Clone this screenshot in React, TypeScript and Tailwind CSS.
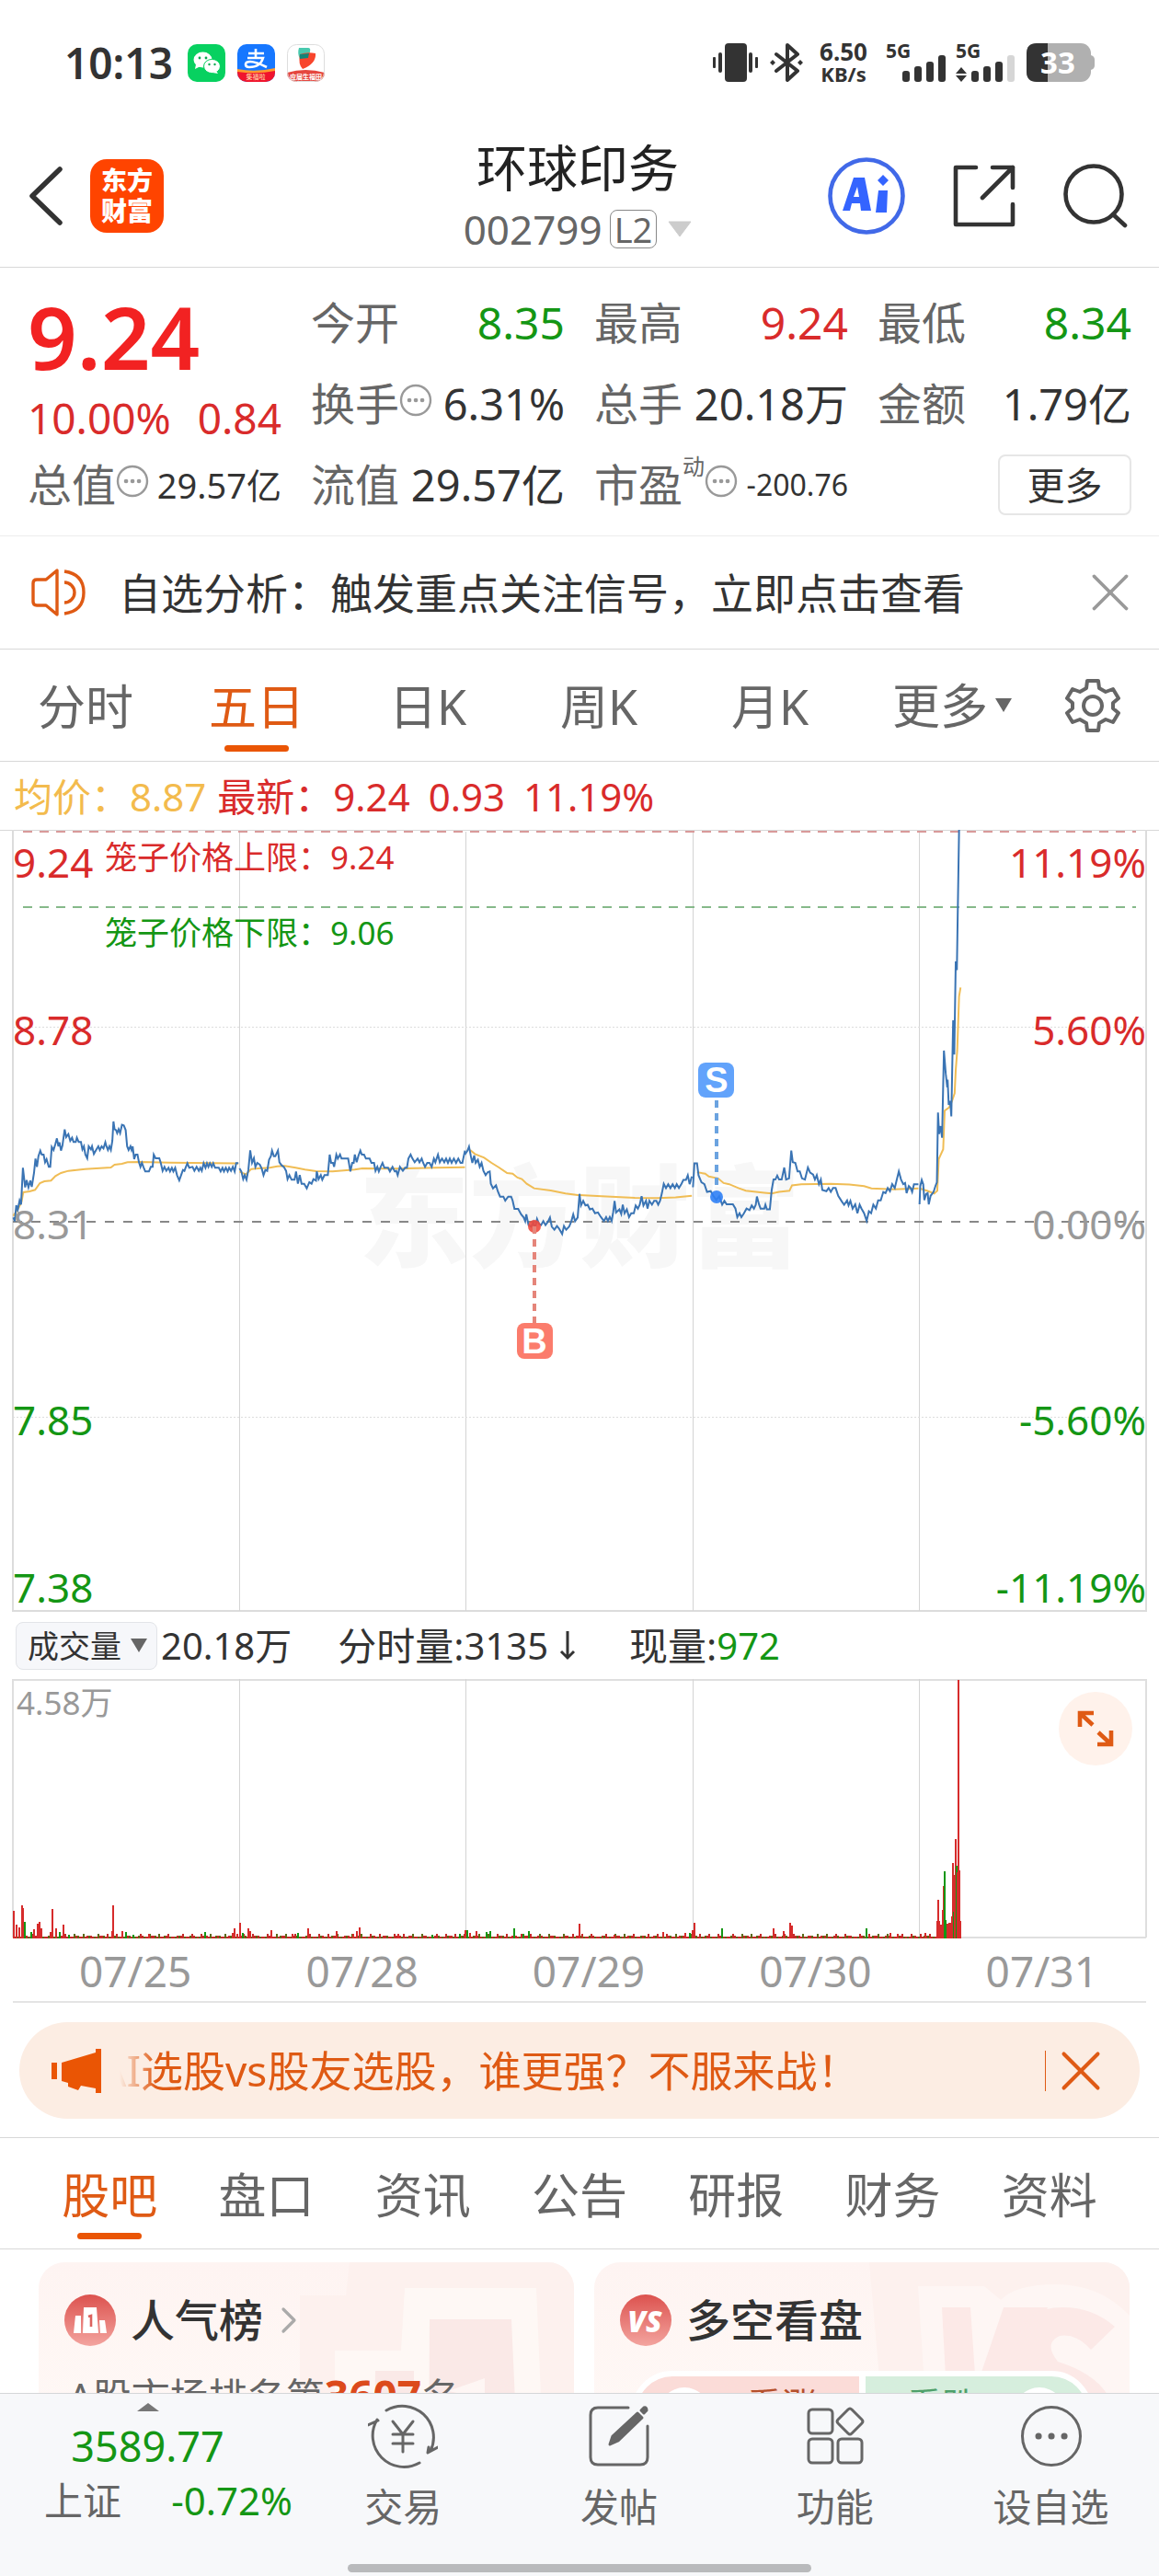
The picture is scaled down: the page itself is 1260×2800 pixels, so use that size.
import type { ReactNode } from "react";
import { X, ChevronRight } from "lucide-react";

const PERIODS = ["分时", "五日", "日K", "周K", "月K"];
const SECTIONS = ["股吧", "盘口", "资讯", "公告", "研报", "财务", "资料"];
const DATES = ["07/25", "07/28", "07/29", "07/30", "07/31"];
const GRID_X = [260, 506, 753, 999];

// Price and average lines. The left half and the right half have their own scale.
const PRICE_LEFT = [
  "36,550 40,562 44,510 48,525 53,495 57,508 62,388 68,452 72,428 77,452 82,430 86,450 92,405 96,358 100,385 104,350 109,332 113,345 118,345 122,370 126,360 132,385 136,385 140,320 145,330 150,310 154,292 158,318 161,305 165,332 169,315 175,263 179,288 185,278 190,300 195,290 199,304 205,304 208,290 213,304 219,304 223,328 227,318 231,345 236,357 240,318 246,328 249,318 254,343 260,330 266,318 270,330 275,318 280,325 285,305 288,318 292,330 296,318 300,330 304,300 307,237 310,262 314,265 317,275 321,262 325,275 330,248 335,250 340,265 344,318 348,330 353,318 356,330 359,318 363,360 367,345 372,345 376,370 380,385 384,372 388,385 393,400 403,400 408,385 413,385 416,345 421,357 431,357 435,372 440,398 445,385 450,398 456,388 460,400 465,388 469,400 474,388 479,412 485,429 490,412 495,395 499,398 503,385 507,373 512,388 521,385 526,398 532,385 538,398 542,388 546,398 551,373 556,388 560,373 564,385 568,373 573,385 577,373 582,388 592,388 597,400 602,388 606,400 611,388 616,400 620,388 625,398 630,385 635,400 639,373 645,373",
  "648,390 653,400 658,425 662,412 667,427 672,395 677,331 682,372 687,357 691,385 696,372 703,378 708,390 713,412 718,395 723,398 728,362 733,350 736,332 741,350 745,350 752,332 756,370 762,380 768,385 774,398 778,425 783,412 789,427 797,427 801,400 806,440 811,412 816,440 823,440 830,455 837,435 843,440 848,425 855,430 857,400 862,425 868,412 872,427 878,412 887,412 892,345 896,372 901,372 904,385 910,345 914,358 920,345 924,358 942,358 948,400 953,372 957,372 960,345 965,370 970,348 975,332 979,345 985,345 990,358 1000,358 1005,372 1012,372 1016,398 1021,385 1025,400 1030,385 1035,372 1040,388 1050,388 1055,400 1062,385 1068,400 1072,398 1076,412 1082,385 1090,398 1096,388 1101,388 1105,358 1111,345 1116,358 1122,370 1130,358 1135,370 1141,358 1145,372 1150,385 1156,372 1162,372 1168,385 1174,358 1178,370 1185,345 1190,370 1196,358 1202,370 1207,358 1212,372 1217,358 1222,372 1228,358 1234,372 1240,358 1246,372 1251,372 1258,332",
  "1258,345 1265,332 1269,319 1274,350 1278,372 1283,348 1287,372 1293,362 1298,385 1303,372 1308,398 1314,412 1320,402 1325,400 1328,440 1334,455 1342,445 1347,465 1353,482 1362,482 1367,495 1375,482 1383,482 1387,495 1392,522 1402,522 1410,540 1417,550 1421,562 1424,540 1430,575 1437,580 1443,565 1447,590 1453,555 1458,570 1464,575 1470,562 1476,575 1482,565 1488,550 1493,580 1500,590 1507,578 1512,585 1521,604 1526,578 1532,590 1540,580 1546,562 1551,540 1556,562 1563,550 1568,474",
];
const PRICE_RIGHT = [
  "0,1420 4,1450 10,1438 16,1450 22,1448 28,1460 35,1458 42,1470 50,1468 58,1480 66,1490 72,1480 77,1490 82,1480 87,1490 91,1468 95,1438 99,1468 108,1460 113,1472 117,1448 122,1470 128,1460 134,1480 140,1470 147,1470 152,1450 158,1458 163,1448 168,1426 173,1450 180,1438 184,1458 189,1438 196,1448 202,1438 208,1438 213,1448 218,1438 223,1418 228,1394 234,1405 240,1395 246,1405 252,1395 258,1405 263,1395 269,1405 276,1394 281,1384 288,1384 293,1372 298,1395 304,1375",
  "307,1403 311,1341 318,1341 322,1372 330,1390 338,1395 345,1415 355,1413 362,1425 370,1436 378,1426 386,1448 392,1438 398,1447 415,1447 422,1458 427,1480 433,1470 438,1480 445,1470 452,1458 460,1462 466,1450 472,1458 477,1448 480,1427 486,1448 490,1458 500,1458 503,1448 507,1460 515,1460 520,1410 525,1383 530,1383 535,1373 540,1383 547,1383 554,1352 559,1383 567,1380 573,1308 577,1338 584,1340 590,1362 596,1362 602,1380 610,1383 618,1352 624,1365 632,1370 637,1383 642,1372 648,1395 653,1383 657,1410 668,1413 674,1405 680,1415 686,1405 693,1405 700,1425 710,1440 716,1448 724,1437 728,1450 733,1438 739,1458 746,1447 752,1470 758,1448 763,1458 770,1470 777,1490 783,1465 789,1470 795,1448 802,1458 808,1437 815,1437 822,1415 828,1418 834,1405 840,1413 846,1395 853,1405 858,1385 864,1362 870,1383 876,1395 881,1392 885,1418 891,1400 896,1405 900,1415 905,1395 917,1395",
  "920,1447 922,1400 926,1384 930,1395 933,1436 938,1420 942,1418 945,1447 950,1425 958,1415 963,1400 967,1390 970,1210 973,1265 977,1245 981,1275 986,1050 991,1110 995,1145 996,1125 999,1190 1003,1180 1006,1220 1011,972 1014,1060 1018,820 1021,842 1027,480",
];
const AVG_LEFT = [
  "36,545 50,520 58,500 63,468 80,465 95,460 108,438 120,432 138,430 150,415 165,405 185,398 230,392 300,387 310,378 330,375 345,370 380,369 460,371 645,374",
  "648,400 665,410 680,392 700,390 730,388 750,383 770,382 800,388 825,394 855,399 900,400 960,394 980,390 1080,391 1180,388 1258,386",
  "1272,330 1285,343 1310,355 1330,372 1350,387 1372,405 1387,407 1400,420 1412,425 1425,440 1445,455 1490,462 1530,472 1568,478",
];
const AVG_RIGHT = [
  "0,1423 60,1426 150,1430 210,1431 260,1429 304,1425",
  "318,1364 340,1368 350,1375 375,1380 390,1392 405,1395 430,1405 450,1412 500,1417 520,1419 540,1415 568,1412 575,1398 600,1395 680,1394 730,1396 770,1400 790,1406 850,1408 917,1406",
  "920,1406 940,1412 960,1419 968,1412 972,1330 984,1305 988,1205 1000,1197 1008,1180 1015,1160 1018,1100 1022,1050 1027,910 1031,887",
];

// [x, height, falling]
const VOLUME: [number, number, number?][] = [
  [15, 30], [18, 15], [21, 12], [24, 36], [25, 33], [27, 18, 1], [34, 7, 1], [37, 10], [41, 16], [43, 18], [45, 11],
  [55, 7], [57, 32], [61, 11], [65, 7, 1], [69, 15], [75, 4, 1], [122, 8], [123, 36], [133, 8], [137, 7, 1], [145, 4, 1],
  [162, 5], [223, 7, 1], [253, 6], [255, 11], [258, 5], [261, 17], [264, 6, 1], [270, 11], [272, 8], [295, 9], [318, 5],
  [324, 6, 1], [335, 11], [366, 8], [384, 5], [388, 8], [391, 12], [433, 5], [470, 4, 1], [500, 5, 1], [506, 9],
  [508, 9, 1], [511, 6], [518, 8], [529, 7, 1], [533, 8, 1], [559, 11, 1], [569, 5, 1], [575, 8, 1], [630, 16],
  [668, 4], [721, 7], [745, 6], [750, 6, 1], [753, 9], [755, 17], [785, 11, 1], [841, 11], [852, 8], [859, 17],
  [861, 14], [942, 11, 1], [968, 6], [976, 5], [1006, 6], [1019, 19], [1020, 42], [1021, 19], [1023, 15], [1025, 31],
  [1026, 57], [1027, 73, 1], [1028, 20, 1], [1030, 16], [1032, 17], [1034, 17], [1035, 24], [1036, 82], [1037, 29, 1],
  [1038, 69], [1039, 108], [1040, 79, 1], [1041, 72], [1042, 281], [1043, 74], [1044, 19],
];
const RED = "#d62b2b";
const GREEN = "#149614";

function Dots() {
  return (
    <svg viewBox="0 0 36 36" className="size-9 shrink-0 -translate-y-1" fill="none" stroke="#999" strokeWidth="2.4">
      <circle cx="18" cy="18" r="16" />
      <path d="M11 18h.1M18 18h.1M25 18h.1" strokeWidth="4.6" strokeLinecap="round" />
    </svg>
  );
}

function Quote({ label, value, tone = "text-[47px] text-[#333]" }: { label: ReactNode; value: string; tone?: string }) {
  return (
    <div className="flex items-center justify-between text-5xl leading-[88px] whitespace-nowrap">
      <span className="flex items-center text-[#666]">{label}</span>
      <span className={tone}>{value}</span>
    </div>
  );
}

function StatusBar() {
  return (
    <div className="flex h-[136px] items-center justify-between pr-[70px] pl-[70px] text-[#333]">
      <div className="flex items-center">
        <span className="mr-4 font-['Noto_Sans'] text-[46px] font-semibold">10:13</span>
        <div className="flex gap-[13px]">
          <svg viewBox="0 0 41 41" className="size-[41px]">
            <rect width="41" height="41" rx="10" fill="#07d160" />
            <ellipse cx="16.500" cy="17" rx="10" ry="8.500" fill="#fff" />
            <path d="M9 22l-1 5 6-3z" fill="#fff" />
            <ellipse cx="26.500" cy="24" rx="9" ry="7.600" fill="#fff" stroke="#07d160" />
            <path d="M31 29l2 3-6-1z" fill="#fff" />
            <g fill="#07a850">
              <circle cx="13" cy="15" r="1.400" />
              <circle cx="20" cy="15" r="1.400" />
              <circle cx="23.500" cy="22" r="1.200" />
              <circle cx="29.500" cy="22" r="1.200" />
            </g>
          </svg>
          <svg viewBox="0 0 41 41" className="size-[41px]">
            <clipPath id="pay"><rect width="41" height="41" rx="10" /></clipPath>
            <g clipPath="url(#pay)">
              <rect width="41" height="41" fill="#1677ff" />
              <path d="M0 28q20 4 41-1v14H0z" fill="#f0142d" />
              <path d="M0 27q20 4 41-1v3q-20 4-41 1z" fill="#ff9a2e" />
              <path d="M12 10h17M20 5v10M11 15h17q-3 10-15 10-4 0-4-3t5-3q6 0 18 6" fill="none" stroke="#fff" strokeWidth="2.600" />
              <text x="20" y="38" fontSize="7" textAnchor="middle" fill="#ffe0b0">集福啦</text>
            </g>
          </svg>
          <svg viewBox="0 0 41 41" className="size-[41px]">
            <clipPath id="food"><rect width="41" height="41" rx="10" /></clipPath>
            <g clipPath="url(#food)">
              <rect width="41" height="41" fill="#fff" />
              <path d="M0 31q20-6 41 0v10H0z" fill="#e5463e" />
              <path d="M13 4h10q3 0 2 4l-1 6-10 2q-3-6-1-12z" fill="#48c9ae" />
              <path d="M14 11q8-3 17-1 1 11-14 17-5-5-3-16z" fill="#f8452c" />
              <path d="M14 11l10-1-1 5-9 1z" fill="#128577" />
              <text x="20.500" y="38" fontSize="7" fontWeight="700" textAnchor="middle" fill="#fff">应届生福田</text>
            </g>
            <rect x=".5" y=".5" width="40" height="40" rx="10" fill="none" stroke="#ddd" />
          </svg>
        </div>
      </div>
      <div className="flex items-center font-['Noto_Sans'] font-bold">
        <svg viewBox="0 0 50 42" className="mr-3 h-[42px] w-[50px]" fill="#333">
          <rect x="13" width="24" height="42" rx="4" />
          <rect x="6" y="10" width="4" height="22" rx="2" />
          <rect y="15" width="3" height="12" rx="1" />
          <rect x="39" y="10" width="4" height="22" rx="2" />
          <rect x="46" y="15" width="3" height="12" rx="1" />
        </svg>
        <svg viewBox="0 0 36 42" className="mr-[18px] h-[42px] w-9" fill="none" stroke="#333" strokeWidth="4" strokeLinejoin="round" strokeLinecap="round">
          <path d="M7 12l23 18-11 10V2l11 10L7 30" />
          <path d="M3 18l3 3-3 3-3-3zM33 18l3 3-3 3-3-3z" fill="#333" stroke="none" />
        </svg>
        <div className="mr-5 flex flex-col items-center">
          <span className="text-[26px] leading-6">6.50</span>
          <span className="text-[22px] leading-6">KB/s</span>
        </div>
        <svg viewBox="0 0 66 42" className="mr-[10px] h-[42px] w-[66px] overflow-visible" fill="#333">
          <text x="0" y="16" fontSize="21">5G</text>
          <rect x="18" y="30" width="8" height="12" rx="3" />
          <rect x="31" y="25" width="8" height="17" rx="3" />
          <rect x="44" y="20" width="8" height="22" rx="3" />
          <rect x="57" y="13" width="8" height="29" rx="3" />
        </svg>
        <svg viewBox="0 0 66 42" className="mr-[11px] h-[42px] w-[66px] overflow-visible" fill="#333">
          <text x="0" y="16" fontSize="21">5G</text>
          <path d="M6 26l6 7H0zM6 42l6-7H0z" />
          <rect x="17" y="30" width="8" height="12" rx="3" />
          <rect x="30" y="25" width="8" height="17" rx="3" />
          <rect x="43" y="20" width="8" height="22" rx="3" />
          <rect x="56" y="13" width="8" height="29" rx="3" fill="#d6d6d6" />
        </svg>
        <svg viewBox="0 0 74 42" className="h-[42px] w-[74px] overflow-visible">
          <rect width="70" height="42" rx="11" fill="#b0b0b0" />
          <path d="M11 0h12v42H11Q0 42 0 31V11Q0 0 11 0z" fill="#333" />
          <path d="M70 13q4 1 4 5v6q0 4-4 5z" fill="#b0b0b0" />
          <text x="34" y="33" fontSize="33" textAnchor="middle" fill="#fff">33</text>
        </svg>
      </div>
    </div>
  );
}

function Header() {
  return (
    <header className="grid h-[155px] grid-cols-[1fr_auto_1fr] items-center border-b border-[#d8d8d8] pr-[34px] pl-[30px]">
      <div className="flex items-center gap-7">
        <button aria-label="返回">
          <svg viewBox="0 0 40 64" className="h-16 w-10" fill="none" stroke="#333" strokeWidth="5.500" strokeLinecap="round" strokeLinejoin="round">
            <path d="M35 3L5 32l30 29" />
          </svg>
        </button>
        <a href="#home" className="flex size-20 items-center justify-center rounded-[18px] bg-[#ff4400] text-center text-[28px] leading-[33px] font-black text-white">
          <span>东方<br />财富</span>
        </a>
      </div>
      <div className="flex flex-col items-center pt-1">
        <h1 className="text-[55px] leading-[68px] text-[#222]">环球印务</h1>
        <button className="flex items-center gap-2 text-[44px] leading-[66px] text-[#666]">
          002799
          <span className="rounded-lg border border-[#888] px-1 text-[38px] leading-10">L2</span>
          <svg viewBox="0 0 26 18" className="ml-1 h-[18px] w-[26px]"><path d="M1 1h24L13 17z" fill="#ccc" stroke="#ccc" strokeLinejoin="round" /></svg>
        </button>
      </div>
      <div className="flex items-center justify-end gap-[52px]">
        <button aria-label="AI">
          <svg viewBox="0 0 84 84" className="size-[84px]">
            <circle cx="42" cy="42" r="39.500" fill="none" stroke="#4169e8" strokeWidth="4.600" />
            <g fill="#3464ff">
              <path fillRule="evenodd" d="M28 22h12l7 36h-11l-1-8h-9l-2 8h-8zM32 32l-4 11h6z" />
              <path d="M55 36h10l-1 24H52zM60 19l6 6-6 6-6-6z" />
            </g>
          </svg>
        </button>
        <button aria-label="分享">
          <svg viewBox="0 0 68 68" className="size-[68px]" fill="none" stroke="#333" strokeWidth="4.600" strokeLinecap="round" strokeLinejoin="round">
            <path d="M25 3H3v62h62V43M43 3h22v22M65 3L32 36" />
          </svg>
        </button>
        <button aria-label="搜索">
          <svg viewBox="0 0 70 70" className="size-[70px]" fill="none" stroke="#333" strokeWidth="4.600" strokeLinecap="round">
            <circle cx="33" cy="33" r="30.500" /><path d="M54 55l13 12" />
          </svg>
        </button>
      </div>
    </header>
  );
}

function Quotes() {
  return (
    <section className="grid grid-cols-4 gap-x-8 border-b border-[#ececec] px-[30px] pt-4 pb-[11px]">
      <div className="row-span-2 text-[#d92b2b]">
        <div className="text-[94px] leading-[118px] font-semibold text-[#f22222]">9.24</div>
        <div className="flex justify-between text-[46px] leading-[58px]">
          <span>10.00%</span>
          <span>0.84</span>
        </div>
      </div>
      <Quote label="今开" value="8.35" tone="text-[#149614]" />
      <Quote label="最高" value="9.24" tone="text-[#d92b2b]" />
      <Quote label="最低" value="8.34" tone="text-[#149614]" />
      <Quote label={<>换手<Dots /></>} value="6.31%" />
      <Quote label="总手" value="20.18万" />
      <Quote label="金额" value="1.79亿" />
      <Quote label={<>总值<Dots /></>} value="29.57亿" tone="text-[38px] text-[#333]" />
      <Quote label="流值" value="29.57亿" />
      <Quote label={<>市盈<sup className="-top-5 text-[24px] leading-6">动</sup><Dots /></>} value="-200.76" tone="text-[32px] text-[#333]" />
      <div className="flex items-center justify-end">
        <button className="h-[66px] w-[145px] rounded-lg border-2 border-[#e6e6e6] text-[41px] leading-10 text-[#333]">更多</button>
      </div>
    </section>
  );
}

function PriceChart() {
  return (
    <section className="relative h-[850px]">
      <div className="absolute inset-x-0 top-[350px] text-center text-[120px] leading-[140px] font-black text-[#f7f7f7]">东方财富</div>
      <svg viewBox="0 902 1260 850" preserveAspectRatio="none" className="absolute inset-0 size-full" fill="none">
        <path d="M0 902.500H1260" stroke="#d8d8d8" />
        <path d="M14 902V1751H1246V902" stroke="#dcdcdc" strokeWidth="2" />
        {GRID_X.map((x) => <path key={x} d={`M${x + 0.5} 904V1751`} stroke="#d4d4d4" />)}
        <path d="M14 1116.500H1246M14 1540.500H1246" stroke="#ddd" strokeDasharray="2 2" />
        <path d="M25 904H1235" stroke="#d99a9a" strokeWidth="2" strokeDasharray="10 8" />
        <path d="M25 986H1235" stroke="#86b98a" strokeWidth="2" strokeDasharray="10 8" />
        <path d="M14 1328H1246" stroke="#888" strokeWidth="2" strokeDasharray="10 10" />
        <g stroke="#f0bd55" strokeWidth="2">
          {AVG_LEFT.map((p) => <polyline key={p} points={p} transform="translate(0 1140) scale(.4018 .3333)" vectorEffect="non-scaling-stroke" />)}
          {AVG_RIGHT.map((p) => <polyline key={p} points={p} transform="translate(630 700) scale(.4018 .4209)" vectorEffect="non-scaling-stroke" />)}
        </g>
        <g stroke="#3a74b4" strokeWidth="2">
          {PRICE_LEFT.map((p) => <polyline key={p} points={p} transform="translate(0 1140) scale(.4018 .3333)" vectorEffect="non-scaling-stroke" />)}
          {PRICE_RIGHT.map((p) => <polyline key={p} points={p} transform="translate(630 700) scale(.4018 .4209)" vectorEffect="non-scaling-stroke" />)}
        </g>
        <circle cx="581" cy="1333" r="7" fill="#ee4a3e" fillOpacity=".9" />
        <path d="M581 1333V1438" stroke="#e5857a" strokeWidth="4" strokeDasharray="8 6" />
        <rect x="562" y="1438" width="39" height="39" rx="8" fill="#fb7c6c" />
        <circle cx="779" cy="1301" r="7" fill="#2f80f5" fillOpacity=".9" />
        <path d="M779 1196V1294" stroke="#6ba3e0" strokeWidth="4" strokeDasharray="8 6" />
        <rect x="759" y="1155" width="39" height="38" rx="8" fill="#62a3fb" />
        <g fill="#fff" fontSize="38" fontWeight="600" textAnchor="middle" fontFamily="Liberation Sans">
          <text x="581" y="1471">B</text>
          <text x="779" y="1187">S</text>
        </g>
      </svg>
      <div className="absolute top-3 left-[114px] text-[35px] leading-9 text-[#d92b2b]">笼子价格上限：9.24</div>
      <div className="absolute top-[94px] left-[114px] text-[35px] leading-9 text-[#149614]">笼子价格下限：9.06</div>
      <div className="absolute inset-x-[14px] inset-y-0 text-[44px] leading-[50px]">
        <div className="absolute inset-x-0 top-[10px] flex justify-between text-[#d92b2b]"><span>9.24</span><span>11.19%</span></div>
        <div className="absolute inset-x-0 top-[192px] flex justify-between text-[#d92b2b]"><span>8.78</span><span>5.60%</span></div>
        <div className="absolute inset-x-0 top-[403px] flex justify-between text-[#999]"><span>8.31</span><span>0.00%</span></div>
        <div className="absolute inset-x-0 top-[616px] flex justify-between text-[#149614]"><span>7.85</span><span>-5.60%</span></div>
        <div className="absolute inset-x-0 top-[798px] flex justify-between text-[#149614]"><span>7.38</span><span>-11.19%</span></div>
      </div>
    </section>
  );
}

function VolumeChart() {
  return (
    <section>
      <div className="flex h-[73px] items-center pl-[17px] text-[40px] whitespace-nowrap text-[#333]">
        <label className="relative mr-1 flex items-center">
          <select aria-label="指标" className="h-[52px] w-[154px] appearance-none rounded-lg border border-[#e2e4e8] bg-[#f6f7fa] pl-3 text-[34px] leading-10">
            <option>成交量</option>
          </select>
          <svg viewBox="0 0 18 15" className="pointer-events-none absolute right-[11px] h-[15px] w-[18px]"><path d="M0 0h18L9 15z" fill="#666" /></svg>
        </label>
        <span className="mr-[50px]">20.18万</span>
        <span className="mr-[58px] flex items-center">
          <span className="text-[42px]">分时量:</span>3135
          <svg viewBox="0 0 18 34" className="ml-3 h-[34px] w-[18px]" fill="none" stroke="#333" strokeWidth="3"><path d="M9 1v29M2 23l7 7 7-7" /></svg>
        </span>
        <span className="text-[42px]">现量:</span>
        <span className="text-[#149614]">972</span>
      </div>
      <div className="relative h-[282px]">
        <svg viewBox="0 1825 1260 282" preserveAspectRatio="none" className="absolute inset-0 size-full" fill="none" shapeRendering="crispEdges">
          <path d="M14 1825.500H1246M14 2106H1246M14 1825V2106M1246 1825V2106" stroke="#dfdfdf" strokeWidth="2" />
          {GRID_X.map((x) => <path key={x} d={`M${x + 0.5} 1825V2106`} stroke="#d4d4d4" />)}
          {Array.from({ length: 515 }, (_, i) => (
            <rect key={i} x={14 + i * 2} y={2105 - ((i * 37) % 23 < 4 ? 3 : (i * 13) % 7 < 3 ? 1 : 0)} width="2" height="5" fill={(i * 29) % 11 < 4 ? "#5c6a17" : "#c52a2a"} />
          ))}
          {VOLUME.map(([x, h, down]) => (
            <rect key={`${x}`} x={x - 1} y={2107 - h} width="2" height={h} fill={down ? GREEN : RED} />
          ))}
        </svg>
        <span className="absolute top-1 left-[18px] text-[35px] leading-11 text-[#999]">4.58万</span>
        <button aria-label="全屏" className="absolute top-[14px] right-[29px] flex size-20 items-center justify-center rounded-full bg-[#fff2eb]">
          <svg viewBox="0 0 40 40" className="size-10" fill="none" stroke="#df5a14" strokeWidth="4.600">
            <path d="M3 18V3h15M3 3l14 13M37 22v15H22M37 37L23 24" />
          </svg>
        </button>
      </div>
      <div className="mx-[14px] grid h-[70px] grid-cols-5 border-b-2 border-[#e4e4e4] text-[46px] leading-[70px] text-[#999]">
        {DATES.map((d) => <span key={d} className="pl-5 text-center">{d}</span>)}
      </div>
    </section>
  );
}

function Cards() {
  return (
    <section className="grid h-[156px] grid-cols-2 gap-[22px] overflow-hidden pt-[14px] pr-8 pl-[42px]">
      <div className="relative h-[240px] overflow-hidden rounded-[28px] bg-gradient-to-b from-[#fef4f2] to-[#fffaf7]">
        <svg viewBox="0 0 582 240" className="absolute inset-y-0 right-0 h-[240px] w-[582px]">
          <path d="M338 0h244v240H284V36h50z" fill="#fdf1ee" />
          <path d="M398 28h143l9 212H322V96h72z" fill="#fef8f5" />
          <path d="M425 62h89l8 178h-98zM366 118h42v122h-44z" fill="#fae9e7" />
          <path d="M445 140l40-14v114h-20v-96z" fill="#fef6f4" />
        </svg>
        <div className="relative px-7 pt-8">
          <h2 className="flex items-center gap-4 text-5xl leading-[62px] font-medium text-[#333]">
            <svg viewBox="0 0 56 56" className="size-14">
              <defs><linearGradient id="badge" x2="0" y2="1"><stop stopColor="#dc524e" /><stop offset="1" stopColor="#f3a49f" /></linearGradient></defs>
              <circle cx="28" cy="28" r="28" fill="url(#badge)" />
              <path d="M21 14h14l2 28H20zM12 23h6v19h-8zM38 28h6l2 14h-7z" fill="#fff" />
              <path d="M26 24l3-1v12" fill="none" stroke="#dc625e" strokeWidth="2.600" />
            </svg>
            人气榜
            <ChevronRight className="-ml-3 size-12 text-[#aaa]" strokeWidth={1.6} />
          </h2>
          <p className="mt-5 pl-1 text-[42px] leading-[60px] text-[#666]">
            A股市场排名第<b className="text-[46px] text-[#dc4a1c]">3607</b>名
          </p>
        </div>
      </div>
      <div className="relative h-[240px] overflow-hidden rounded-[28px] bg-gradient-to-b from-[#fef4f2] to-[#fffaf7]">
        <svg viewBox="0 0 582 240" className="absolute inset-y-0 right-0 h-[240px] w-[582px]">
          <path d="M299 0h283v240H320z" fill="#fdf1ee" />
          <path d="M352 26h72l18 15q16-17 60-17 48 0 80 34v182H366z" fill="#fef6f4" />
          <path d="M378 49h31l6 88 30-88h48L432 240h-44z" fill="#fce9e7" />
          <path d="M566 70l-26 25q-16-18-34-15-18 8-2 28 70 22 62 80-10 40-70 52h-60l-14-110 38-10q-8-72 50-71 32 0 56 21z" fill="#fce9e7" />
        </svg>
        <div className="relative px-7 pt-8">
          <h2 className="flex items-center gap-4 text-5xl leading-[62px] font-medium text-[#333]">
            <svg viewBox="0 0 56 56" className="size-14">
              <circle cx="28" cy="28" r="28" fill="url(#badge)" />
              <text x="27" y="41" textAnchor="middle" fontSize="32" fontWeight="800" fontStyle="italic" fill="#fff" fontFamily="Open Sans">VS</text>
            </svg>
            多空看盘
          </h2>
          <div className="mx-3 mt-6 flex h-[90px] gap-[7px] overflow-hidden rounded-full border-[6px] border-white bg-white text-[38px] leading-[60px]">
            <div className="flex flex-1 items-start bg-[#fbdcd8] text-[#b5502c]">
              <span className="mt-3 ml-6 size-14 rounded-full bg-white" />
              <span className="ml-10">看涨</span>
            </div>
            <div className="flex flex-1 items-start justify-end bg-[#d6eedd] text-[#4fa06a]">
              <span className="mr-10">看跌</span>
              <span className="mt-3 mr-6 size-14 rounded-full bg-white" />
            </div>
          </div>
        </div>
      </div>
    </section>
  );
}

function NavItem({ label, children }: { label: string; children: ReactNode }) {
  return (
    <button className="flex flex-1 flex-col items-center pt-2 text-[42px] leading-[54px] text-[#666]">
      <svg viewBox="0 0 76 76" className="mb-3 size-[76px]" fill="none" stroke="#666" strokeWidth="3" strokeLinecap="round" strokeLinejoin="round">
        {children}
      </svg>
      {label}
    </button>
  );
}

function BottomBar() {
  return (
    <footer className="h-[199px] border-t border-[#d4d6d8] bg-[#f7f8fa]">
      <div className="flex h-[185px]">
        <a href="#index" className="flex w-[321px] flex-col items-center pt-[10px] text-[#149614]">
          <svg viewBox="0 0 24 9" className="h-[9px] w-6"><path d="M12 0l12 9H0z" fill="#777" /></svg>
          <span className="mt-2 text-[45px] leading-[60px]">3589.77</span>
          <span className="flex w-full justify-between pr-[3px] pl-12 text-[42px] leading-[58px]">
            <span className="text-[#666]">上证</span>
            <span>-0.72%</span>
          </span>
        </a>
        <NavItem label="交易">
          <path d="M20 10A34 34 0 0 1 68 54M56 67A34 34 0 0 1 10 20M0 26l11-5M76 50l-11 6 1-6" />
          <path d="M27 22l11 14 11-14M38 36v19M27 36h22M27 46h22" />
        </NavItem>
        <NavItem label="发帖">
          <path d="M48 7H15q-8 0-8 8v46q0 8 8 8h46q8 0 8-8V27" />
          <path d="M28 47l3-9 27-25 5 5-26 25zM62 10l3-3q3-1 3 3l-3 3z" fill="#666" />
        </NavItem>
        <NavItem label="功能">
          <rect x="9" y="9" width="26" height="26" rx="4" />
          <rect x="9" y="41" width="26" height="26" rx="4" />
          <rect x="41" y="41" width="26" height="26" rx="4" />
          <path d="M52 9q2-2 4 0l11 11q2 2 0 4L56 35q-2 2-4 0L41 24q-2-2 0-4z" />
        </NavItem>
        <NavItem label="设自选">
          <circle cx="38" cy="38" r="31.500" />
          <path d="M24 38h.1M38 38h.1M52 38h.1" strokeWidth="7" />
        </NavItem>
      </div>
      <div className="mx-auto h-[9px] w-2/5 rounded-full bg-[#b9babc]" />
    </footer>
  );
}

export default function App() {
  return (
    <div className="w-full overflow-hidden bg-white font-['Noto_Sans','Noto_Sans_CJK_SC',sans-serif]">
      <StatusBar />
      <Header />
      <Quotes />

      <section className="flex h-[123px] items-center border-b border-[#d8d8d8] pr-[18px] pl-[34px] text-[46px] text-[#333]">
        <svg viewBox="0 0 60 52" className="mr-[35px] h-[52px] w-[60px]" fill="none" stroke="#df5a14" strokeWidth="3.400" strokeLinejoin="round">
          <path d="M28 2v48L16 40H6q-4 0-4-4V16q0-4 4-4h10z" />
          <path d="M36 15a11 11 0 0 1 0 22M36 3q21 3 21 23T36 49" />
        </svg>
        <p className="flex-1">自选分析：触发重点关注信号，立即点击查看</p>
        <button aria-label="关闭"><X className="size-[70px] text-[#999]" strokeWidth={1.3} /></button>
      </section>

      <nav className="flex h-[122px] border-b border-[#d8d8d8] text-[52px] leading-[124px] text-[#666]">
        {PERIODS.map((p) => (
          <button key={p} className={p === "五日" ? "relative flex-1 text-[#df5a14]" : "flex-1"}>
            {p}
            {p === "五日" && <span className="absolute bottom-[10px] left-1/2 h-[7px] w-[70px] -translate-x-1/2 rounded-full bg-[#ea5504]" />}
          </button>
        ))}
        <button className="flex w-[186px] items-center justify-end gap-2 pr-4 whitespace-nowrap">
          更多
          <svg viewBox="0 0 18 15" className="h-[15px] w-[18px]"><path d="M0 0h18L9 15z" fill="#666" /></svg>
        </button>
        <button aria-label="设置" className="flex w-36 items-center justify-center">
          <svg viewBox="0 0 60 60" className="size-[60px]" fill="none" stroke="#666" strokeWidth="4" strokeLinejoin="round">
            <path d="M24 3h12l1 8 7 4 8-3 6 10-6 5v6l6 5-6 10-8-3-7 4-1 8H24l-1-8-7-4-8 3L2 38l6-5v-6l-6-5 6-10 8 3 7-4z" />
            <circle cx="30" cy="30" r="10" />
          </svg>
        </button>
      </nav>

      <div className="flex h-[74px] items-center pl-[15px] text-[42px] whitespace-pre text-[#d92b2b]">
        <span className="mr-3 text-[#f3bb4d]">均价：8.87</span>
        <span className="mr-5">最新：9.24</span>
        <span className="mr-5">0.93</span>
        <span>11.19%</span>
      </div>

      <PriceChart />
      <VolumeChart />

      <div className="mx-[21px] mt-[21px] mb-5 flex h-[105px] items-center rounded-full bg-[#fcede3] pr-[27px] pl-[35px] text-[46px] text-[#df5a14]">
        <svg viewBox="0 0 54 48" className="mr-5 h-12 w-[54px]" fill="#ea5504">
          <path d="M0 15h6v18H0zM11 15L48 4V0h6v48h-6v-5l-16-3-3 5-11-4v-4l-7-2z" />
        </svg>
        <div className="flex-1 overflow-hidden [mask-image:linear-gradient(to_right,transparent,black_40px)]">
          <p className="-ml-[22px] whitespace-nowrap">AI选股vs股友选股，谁更强？不服来战！</p>
        </div>
        <span className="mr-px h-11 w-px bg-[#df5a14]" />
        <button aria-label="关闭"><X className="size-[74px]" strokeWidth={1.3} /></button>
      </div>

      <nav className="flex h-[122px] border-y border-[#d8d8d8] px-[34px] text-[52px] leading-[124px] text-[#666]">
        {SECTIONS.map((s) => (
          <button key={s} className={s === "股吧" ? "relative flex-1 text-[#df5a14]" : "flex-1"}>
            {s}
            {s === "股吧" && <span className="absolute bottom-[10px] left-1/2 h-[7px] w-[70px] -translate-x-1/2 rounded-full bg-[#ea5504]" />}
          </button>
        ))}
      </nav>

      <Cards />
      <BottomBar />
    </div>
  );
}
